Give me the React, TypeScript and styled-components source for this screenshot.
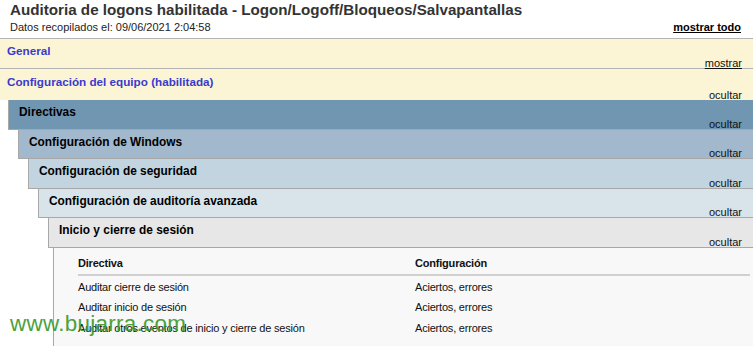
import React from "react";
import styled, { createGlobalStyle } from "styled-components";

const GlobalStyle = createGlobalStyle`
  html, body {
    margin: 0;
    padding: 0;
    background: #fff;
    font-family: "Liberation Sans", Arial, sans-serif;
  }
`;

const levelColors = ["#7096b2", "#a2b8cc", "#c1d4e0", "#d9e3ea", "#e7e7e7"];

const rows = [
  { name: "Auditar cierre de sesión", value: "Aciertos, errores" },
  { name: "Auditar inicio de sesión", value: "Aciertos, errores" },
  { name: "Auditar otros eventos de inicio y cierre de sesión", value: "Aciertos, errores" },
];

function Report() {
  return (
    <Page>
      <GlobalStyle />
      <Header>
        <Title>Auditoria de logons habilitada - Logon/Logoff/Bloqueos/Salvapantallas</Title>
        <SubRow>
          <Collected>Datos recopilados el: 09/06/2021 2:04:58</Collected>
          <ShowAll>mostrar todo</ShowAll>
        </SubRow>
      </Header>

      <YellowHead $tall={false}>
        <YellowTitle>General</YellowTitle>
        <Toggle $underline>mostrar</Toggle>
      </YellowHead>

      <YellowHead $tall>
        <YellowTitle>Configuración del equipo (habilitada)</YellowTitle>
        <Toggle>ocultar</Toggle>
      </YellowHead>

      <Indent>
        <Level title="Directivas" level={0}>
          <Level title="Configuración de Windows" level={1}>
            <Level title="Configuración de seguridad" level={2}>
              <Level title="Configuración de auditoría avanzada" level={3}>
                <Level title="Inicio y cierre de sesión" level={4}>
                  <Content>
                    <Table>
                      <thead>
                        <tr>
                          <Th>Directiva</Th>
                          <Th>Configuración</Th>
                        </tr>
                      </thead>
                      <tbody>
                        {rows.map((r) => (
                          <tr key={r.name}>
                            <Td>{r.name}</Td>
                            <Td>{r.value}</Td>
                          </tr>
                        ))}
                      </tbody>
                    </Table>
                  </Content>
                </Level>
              </Level>
            </Level>
          </Level>
        </Level>
      </Indent>

      <Watermark>www.bujarra.com</Watermark>
    </Page>
  );
}

function Level({ title, level, children }: { title: string; level: number; children: React.ReactNode }) {
  return (
    <div>
      <LevelHead $bg={levelColors[level]}>
        <LevelTitle>{title}</LevelTitle>
        <Toggle>ocultar</Toggle>
      </LevelHead>
      <Indent>{children}</Indent>
    </div>
  );
}

const Page = styled.div`
  position: relative;
  width: 753px;
  height: 346px;
  overflow: hidden;
`;

const Header = styled.div`
  padding: 1px 11px 0 10px;
  height: 37px;
`;

const Title = styled.div`
  font-size: 15.2px;
  font-weight: bold;
  color: #333;
  line-height: 18px;
`;

const SubRow = styled.div`
  display: flex;
  justify-content: space-between;
  align-items: baseline;
  margin-top: 2px;
`;

const Collected = styled.div`
  font-size: 11px;
  color: #222;
`;

const ShowAll = styled.a`
  font-size: 11px;
  font-weight: bold;
  color: #000;
  text-decoration: underline;
  cursor: pointer;
  margin-right: 1px;
`;

const YellowHead = styled.div<{ $tall: boolean }>`
  display: flex;
  justify-content: space-between;
  box-sizing: border-box;
  height: ${({ $tall }) => ($tall ? "32px" : "30px")};
  background: #fbf5d5;
  border-top: 1px solid #b4b4b4;
  padding: ${({ $tall }) => ($tall ? "6px" : "5px")} 11px 0 7px;
`;

const YellowTitle = styled.div`
  font-size: 11.7px;
  font-weight: bold;
  color: #3a3ad0;
  align-self: flex-start;
`;

const Toggle = styled.a<{ $underline?: boolean }>`
  align-self: flex-end;
  font-size: 11px;
  color: #111;
  line-height: 12px;
  margin-bottom: -1px;
  text-decoration: ${({ $underline }) => ($underline ? "underline" : "none")};
  cursor: pointer;
`;

const Indent = styled.div`
  padding-left: 8px;
  & & {
    padding-left: 10px;
  }
`;

const LevelHead = styled.div<{ $bg: string }>`
  display: flex;
  justify-content: space-between;
  box-sizing: border-box;
  height: 29.6px;
  background: ${({ $bg }) => $bg};
  border-left: 1px solid #a8a8a8;
  border-bottom: 1px solid #a8a8a8;
  padding: 5px 11px 0 10px;
`;

const LevelTitle = styled.div`
  align-self: flex-start;
  font-size: 11.9px;
  font-weight: bold;
  color: #000;
`;

const Content = styled.div`
  margin-left: -5px;
  background: #f8f8f8;
  border-left: 1px solid #a8a8a8;
  padding: 9px 3px 20px 24px;
  min-height: 120px;
`;

const Table = styled.table`
  width: 100%;
  border-collapse: collapse;
  font-size: 11px;
  letter-spacing: -0.2px;
  color: #111;
`;

const Th = styled.th`
  text-align: left;
  font-weight: bold;
  padding: 0 0 5px 0;
  border-bottom: 2px solid #d0d0d0;
  width: 337px;
  &:last-child {
    width: auto;
  }
`;

const Td = styled.td`
  padding: 1px 0 0 0;
  height: 19.5px;
  vertical-align: middle;
`;

const Watermark = styled.div`
  position: absolute;
  left: 10px;
  top: 311px;
  font-size: 22.4px;
  color: #3d9a2c;
  opacity: 0.92;
  letter-spacing: 0.3px;
  pointer-events: none;
`;

export default Report;
